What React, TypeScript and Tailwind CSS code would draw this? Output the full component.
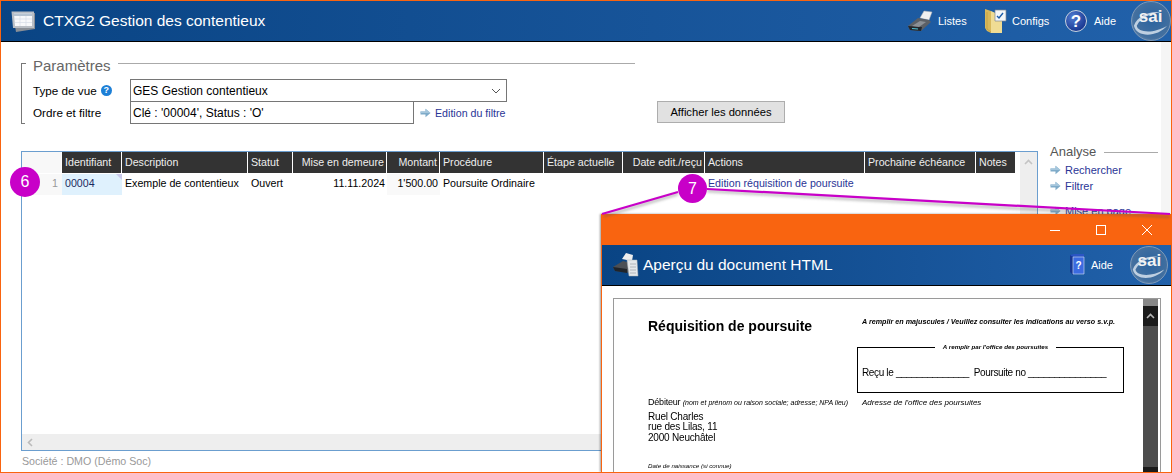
const headers = [
  { label: '', cls: 'bg-[#f8f8f8]' },
  { label: 'Identifiant', cls: 'text-[#7db6ea] text-left' },
  { label: 'Description', cls: 'text-left' },
  { label: 'Statut', cls: 'text-left' },
  { label: 'Mise en demeure', cls: 'text-right' },
  { label: 'Montant', cls: 'text-right' },
  { label: 'Procédure', cls: 'text-left' },
  { label: 'Étape actuelle', cls: 'text-left' },
  { label: 'Date edit./reçu', cls: 'text-right' },
  { label: 'Actions', cls: 'text-left' },
  { label: 'Prochaine échéance', cls: 'text-left' },
  { label: 'Notes', cls: 'text-left' },
];

const Arrow = () => (
  <svg width="11" height="10" viewBox="0 0 11 10" className="shrink-0">
    <path d="M0.5 3.5H5.5V0.8L10.5 5L5.5 9.2V6.5H0.5Z" fill="#7fabc9" />
    <path d="M0.5 3.5H5.5V0.8L10.5 5H0.5Z" fill="#a5c6dc" />
  </svg>
);

const SaiLogo = ({ size }: { size: number }) => (
  <div
    className="relative shrink-0 rounded-full border border-[#7f9ab8] bg-[radial-gradient(circle_at_55%_45%,#2a639f,#44709f_65%,#8aa3bd_100%)] font-['Liberation_Sans',sans-serif]"
    style={{ width: size, height: size }}
  >
    <svg viewBox="0 0 40 40" className="absolute inset-0 h-full w-full">
      <path d="M2 25C6 14 20 9 30 11C22 11 9 16 5 25C6 32 22 34 37 25C27 37 5 38 2 25Z" fill="#d5e0ec" opacity="0.85" />
    </svg>
    <span className="absolute left-[18%] top-[12%] text-[17px] font-bold leading-[20px] text-[#f2f2f2]">sai</span>
  </div>
);

const HeaderBar = ({ children }: { children: React.ReactNode }) => (
  <div className="flex h-[41px] shrink-0 items-center border-b border-black bg-gradient-to-r from-[#094484] to-[#2161aa] font-['Liberation_Sans',sans-serif] text-white">
    {children}
  </div>
);

const AppIcon = () => (
  <svg width="26" height="24" viewBox="0 0 26 24" className="ml-[9px] shrink-0">
    <path d="M3 5L25 4V20L6 23Z" fill="#8a8f96" />
    <path d="M1.5 2.5H24V19H3Z" fill="#b9bec5" />
    <path d="M4 4.5H22V17H5Z" fill="#f7f8fa" />
    <path d="M4 4.5H22V7H4Z" fill="#b6c3d1" />
    <path d="M4.5 10H22M4.8 13.5H22M10 7V17M16 7V17" stroke="#d5dde6" strokeWidth="0.7" />
  </svg>
);

const PrinterIcon = () => (
  <svg width="26" height="22" viewBox="0 0 26 22" className="shrink-0">
    <path d="M13 8L17 1L25 2L22 10Z" fill="#f0f0f0" stroke="#b5b5b5" strokeWidth="0.5" />
    <path d="M1 16L11 8L22 10L24 12L14 21L3 20Z" fill="#5c6066" />
    <path d="M1 16L3 20L14 21L15 17Z" fill="#22262b" />
    <path d="M5 16L13 11L19 12L12 17Z" fill="#8b9096" />
    <path d="M5 18.5L11 19" stroke="#4fc3d9" strokeWidth="1.2" />
  </svg>
);

const FolderIcon = () => (
  <svg width="22" height="26" viewBox="0 0 22 26" className="shrink-0">
    <path d="M0 1L6 3V25L2 23L0 20Z" fill="#d8b95c" />
    <path d="M6 3L17 8V25H6Z" fill="#f0dc94" />
    <path d="M10 2H21V13H10Z" fill="#f4f6f8" stroke="#7e8893" strokeWidth="0.7" />
    <path d="M12 8L14 10L18 5" stroke="#1c5ca8" strokeWidth="1.4" fill="none" />
    <path d="M2 4V21L6 24" stroke="#b8953c" strokeWidth="0.6" fill="none" />
  </svg>
);

const HelpCircle = () => (
  <div className="flex h-[22px] w-[22px] shrink-0 items-center justify-center rounded-full border border-[#c9d3df] bg-[radial-gradient(circle_at_35%_30%,#4f7bd0,#17348e_80%)] text-[17px] font-bold leading-none text-white">
    ?
  </div>
);

const HelpBook = () => (
  <svg width="16" height="22" viewBox="0 0 16 22" className="shrink-0">
    <path d="M1 1L5 0H15V20H4L1 17Z" fill="#2b55c4" />
    <path d="M1 1L4 3V21L1 18Z" fill="#173792" />
    <path d="M4 3H15V20H4Z" fill="#3c6be0" stroke="#d7e0f2" strokeWidth="0.6" />
    <text x="9.5" y="15" fontSize="10" fontWeight="700" fill="#fff" textAnchor="middle" fontFamily="Liberation Sans">?</text>
  </svg>
);

const ReportIcon = () => (
  <svg width="27" height="24" viewBox="0 0 27 24" className="shrink-0">
    <path d="M1 14L11 8L19 10L19 20L3 18Z" fill="#4b4f55" />
    <path d="M1 14L3 18L15 20L15 16Z" fill="#20242a" />
    <path d="M10 6L14 0L21 2L20 8Z" fill="#eeeeee" />
    <path d="M15 7L25 7L26 23L17 23Z" fill="#e4e7ea" stroke="#aab0b6" strokeWidth="0.5" />
    <path d="M18 11H24M18 14H24M18 17H24M18 20H24" stroke="#a3a9b0" strokeWidth="0.8" />
  </svg>
);

const Badge = ({ n, cls }: { n: string; cls: string }) => (
  <div className={`absolute z-30 flex items-center justify-center rounded-full bg-[#c800c8] font-['Liberation_Sans',sans-serif] text-[16px] text-white ${cls}`}>
    {n}
  </div>
);

const SideLink = ({ children, cls }: { children: React.ReactNode; cls?: string }) => (
  <div className={`flex h-[16px] items-center gap-[4px] text-[#2a3596] ${cls ?? ''}`}>
    <Arrow />
    <span>{children}</span>
  </div>
);

const Document = () => (
  <div className="flex min-h-0 flex-1 overflow-hidden border border-b-0 border-[#9a9a9a] bg-white text-black">
    <div className="w-[529px] shrink-0 pl-[34px] pt-[17px] blur-[0.25px]">
      <div className="flex">
        <div className="w-[209px] shrink-0 pt-[1px] text-[14px] font-bold leading-[18px]">Réquisition de poursuite</div>
        <div className="pt-[1px]">
          <div className="pl-[5px] text-[7.2px] font-bold italic leading-[10px] whitespace-nowrap">
            A remplir en majuscules / Veuillez consulter les indications au verso s.v.p.
          </div>
          <div className="mt-[21px] w-[267px] border-x border-b border-black">
            <div className="-mt-[1px] flex h-[7px] items-start">
              <div className="h-px w-[77px] bg-black" />
              <div className="w-[121px] -translate-y-[4px] text-center text-[6.2px] font-bold italic leading-[7px] whitespace-nowrap">
                A remplir par l'office des poursuites
              </div>
              <div className="h-px flex-1 bg-black" />
            </div>
            <div className="pb-[13px] pl-[4px] pt-[12px] text-[10px] leading-[13px] tracking-[-0.35px] whitespace-nowrap">
              Reçu le ______________&nbsp; Poursuite no _______________
            </div>
          </div>
        </div>
      </div>
      <div className="mt-[3px] flex items-baseline">
        <div className="w-[214px] shrink-0 whitespace-nowrap text-[9px] tracking-[-0.2px]">
          Débiteur <span className="text-[7px] italic tracking-normal">(nom et prénom ou raison sociale; adresse; NPA lieu)</span>
        </div>
        <div className="text-[8px] italic">Adresse de l'office des poursuites</div>
      </div>
      <div className="mt-[2px] text-[10px] leading-[10.8px] tracking-[-0.2px]">
        <div>Ruel Charles</div>
        <div>rue des Lilas, 11</div>
        <div>2000 Neuchâtel</div>
      </div>
      <div className="mt-[18px] text-[6.2px] italic leading-[8px]">Date de naissance (si connue)</div>
    </div>
    <div className="flex w-[15px] shrink-0 flex-col bg-[#1b1b1b]">
      <div className="h-[7px] bg-[#888888]" />
      <div className="flex h-[20px] items-center justify-center text-white">
        <svg width="9" height="6" viewBox="0 0 9 6"><path d="M1 5L4.5 1.5L8 5" stroke="#b5b5b5" strokeWidth="1.6" fill="none" /></svg>
      </div>
      <div className="h-[141px] bg-[#4d4d4d]" />
    </div>
  </div>
);

export default function App() {
  return (
    <div className="relative flex h-[473px] w-[1172px] flex-col overflow-hidden border border-[#f96410] bg-white font-['Liberation_Sans',sans-serif] text-[11px] text-black">
      <HeaderBar>
        <AppIcon />
        <div className="ml-[7px] text-[15.5px] leading-[20px]">CTXG2 Gestion des contentieux</div>
        <div className="ml-auto flex items-center">
          <PrinterIcon />
          <span className="ml-[5px] w-[29px]">Listes</span>
          <div className="ml-[18px]"><FolderIcon /></div>
          <span className="ml-[5px] w-[37px]">Configs</span>
          <div className="ml-[16px]"><HelpCircle /></div>
          <span className="ml-[7px] w-[22px]">Aide</span>
          <div className="ml-[15px]"><SaiLogo size={40} /></div>
        </div>
      </HeaderBar>

      <div className="flex min-h-0 flex-1">
        <div className="flex w-[1160px] shrink-0 flex-col pl-[20px]">
          <div className="mt-[21px] flex">
            <div className="w-[614px] shrink-0 border-l border-[#777777]">
              <div className="flex h-[16px] items-start">
                <div className="h-px w-[4px] bg-[#777777]" />
                <div className="-mt-[6px] px-[7px] text-[15px] leading-[17px] text-[#666666]">Paramètres</div>
                <div className="h-px flex-1 bg-[#aaaaaa]" />
              </div>
              <div className="flex h-[23px] items-center pl-[11px] text-[11.7px]">
                <div className="flex w-[97px] items-center gap-[4px]">
                  Type de vue
                  <div className="flex h-[11px] w-[11px] items-center justify-center rounded-full bg-[#1c7fd6] text-[9px] font-bold leading-none text-white">?</div>
                </div>
                <div className="flex h-[23px] w-[377px] items-center justify-between border border-[#767676] pl-[2px] pr-[5px] text-[12px]">
                  GES Gestion contentieux
                  <svg width="10" height="6" viewBox="0 0 10 6"><path d="M1 1L5 5L9 1" stroke="#555555" fill="none" /></svg>
                </div>
              </div>
              <div className="relative -mt-px flex h-[23px] items-center pl-[11px]">
                <div className="w-[97px] text-[11.7px]">Ordre et filtre</div>
                <div className="flex h-[23px] w-[284px] items-center border border-[#767676] pl-[2px] text-[12px]">Clé : '00004', Status : 'O'</div>
                <div className="ml-[6px] flex items-center gap-[4px] text-[10.67px] text-[#2a3596]">
                  <Arrow />
                  Edition du filtre
                </div>
                <div className="absolute bottom-0 left-0 h-px w-[3px] bg-[#777777]" />
              </div>
            </div>
            <div className="mb-px ml-[22px] flex h-[22px] w-[128px] items-center justify-center self-end border border-[#adadad] bg-[#e1e1e1] text-[11.2px]">
              Afficher les données
            </div>
          </div>

          <div className="mt-[27px] flex min-h-0 flex-1">
            <div className="flex h-[300px] w-[1017px] shrink-0 flex-col border border-[#6b9ecf] text-[10.67px]">
              <div className="flex min-h-0 flex-1">
                <div className="flex-1">
                  <div className="grid grid-cols-[40px_60px_126px_45px_94px_53px_104px_79px_82px_160px_111px_39px]">
                    {headers.map((h, i) => (
                      <div
                        key={i}
                        className={`h-[21px] whitespace-nowrap border-r border-white bg-[#333333] pl-[3px] pr-[2px] leading-[20px] text-[#eeeeee] last:border-r-0 ${h.cls}`}
                      >
                        {h.label}
                      </div>
                    ))}
                  </div>
                  <div className="mt-px grid grid-cols-[40px_60px_126px_45px_94px_53px_104px_79px_82px_160px_111px_39px] leading-[19px]">
                    <div className="h-[21px] bg-[#f8f8f8] pr-[4px] text-right text-[#999999]">1</div>
                    <div className="relative h-[21px] bg-[#dff1fd] pl-[3px] text-[#1b2a60]">
                      00004
                      <div className="absolute right-0 top-0 h-0 w-0 border-l-[6px] border-t-[6px] border-l-transparent border-t-[#c9c9ea]" />
                    </div>
                    <div className="pl-[3px]">Exemple de contentieux</div>
                    <div className="pl-[3px]">Ouvert</div>
                    <div className="pr-[2px] text-right">11.11.2024</div>
                    <div className="bg-[#f9f9f9] pr-[2px] text-right">1'500.00</div>
                    <div className="whitespace-nowrap pl-[3px]">Poursuite Ordinaire</div>
                    <div />
                    <div />
                    <div className="whitespace-nowrap pl-[3px] text-[#2a3596]">Edition réquisition de poursuite</div>
                    <div />
                    <div />
                  </div>
                </div>
                <div className="flex w-[17px] shrink-0 justify-center bg-[#eeeeee] pt-[7px]">
                  <svg width="9" height="6" viewBox="0 0 9 6"><path d="M1 5L4.5 1.5L8 5" stroke="#c4c4c4" strokeWidth="1.6" fill="none" /></svg>
                </div>
              </div>
              <div className="flex h-[16px] shrink-0 items-center bg-[#eeeeee] pl-[5px]">
                <svg width="6" height="9" viewBox="0 0 6 9"><path d="M5 1L1.5 4.5L5 8" stroke="#bbbbbb" strokeWidth="1.6" fill="none" /></svg>
              </div>
            </div>
            <div className="ml-[12px] w-[108px] shrink-0">
              <div className="-mt-[7px] flex items-center gap-[8px]">
                <span className="text-[13px] leading-[16px] text-[#555555]">Analyse</span>
                <div className="h-px flex-1 bg-[#aaaaaa]" />
              </div>
              <div className="mt-[2px]">
                <SideLink>Rechercher</SideLink>
                <SideLink>Filtrer</SideLink>
                <SideLink cls="mt-[9px]">Mise en page</SideLink>
              </div>
            </div>
          </div>
          <div className="pb-[3px] pl-px text-[10.67px] text-[#999999]">Société : DMO (Démo Soc)</div>
        </div>
        <div className="flex-1 bg-[#f5f5f5]" />
      </div>

      <svg width="1172" height="473" className="pointer-events-none absolute -left-px -top-px z-20">
        <defs>
          <filter id="soft"><feGaussianBlur stdDeviation="1.4" /></filter>
        </defs>
        <path d="M604 216L678 194M707 191L1170 217" stroke="#555555" strokeWidth="2" opacity="0.5" filter="url(#soft)" fill="none" />
        <path d="M602 214L678 192M707 189L1170 214" stroke="#c800c8" strokeWidth="2.2" fill="none" />
      </svg>
      <Badge n="6" cls="left-[9px] top-[166px] h-[30px] w-[30px]" />
      <Badge n="7" cls="left-[677px] top-[173px] h-[29px] w-[29px]" />

      <div className="absolute bottom-0 left-[600px] right-0 top-[213px] z-10 flex flex-col border-l border-[#f96410] bg-white shadow-[-1px_0_2px_rgba(0,0,0,0.4)]">
        <div className="flex h-[31px] shrink-0 items-center justify-end bg-[#f96410] pr-px text-white">
          <div className="flex h-full w-[46px] items-center justify-center">
            <svg width="10" height="10" viewBox="0 0 10 10"><path d="M0 5.5H10" stroke="#fff" /></svg>
          </div>
          <div className="flex h-full w-[46px] items-center justify-center">
            <svg width="10" height="10" viewBox="0 0 10 10"><rect x="0.5" y="0.5" width="9" height="9" stroke="#fff" fill="none" /></svg>
          </div>
          <div className="flex h-full w-[46px] items-center justify-center">
            <svg width="10" height="10" viewBox="0 0 10 10"><path d="M0 0L10 10M10 0L0 10" stroke="#fff" /></svg>
          </div>
        </div>
        <HeaderBar>
          <div className="ml-[10px]"><ReportIcon /></div>
          <div className="ml-[4px] text-[15.5px] leading-[20px]">Aperçu du document HTML</div>
          <div className="ml-auto flex items-center">
            <HelpBook />
            <span className="ml-[6px] text-[11px]">Aide</span>
            <div className="mr-[3px] ml-[17px]"><SaiLogo size={38} /></div>
          </div>
        </HeaderBar>
        <div className="flex min-h-0 flex-1 pl-[11px] pr-[10px] pt-[12px]">
          <Document />
        </div>
      </div>
    </div>
  );
}
